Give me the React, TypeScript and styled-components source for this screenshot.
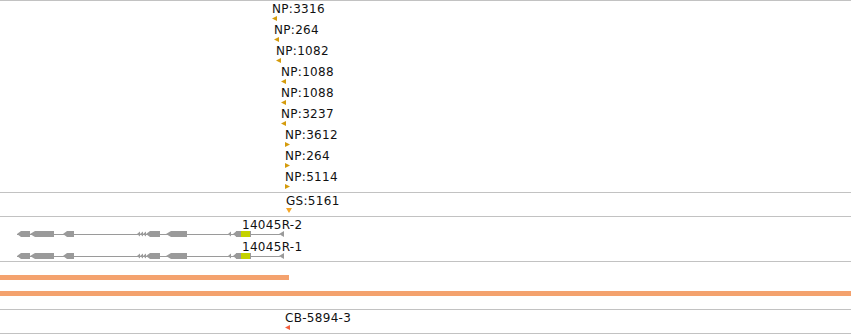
import styled, { createGlobalStyle } from "styled-components";

type Dir = "left" | "right" | "down";

type TFeature = {
  label: string;
  x: number;
  dir: Dir;
};

const npFeatures: TFeature[] = [
  { label: "NP:3316", x: 272, dir: "left" },
  { label: "NP:264", x: 274, dir: "left" },
  { label: "NP:1082", x: 276, dir: "left" },
  { label: "NP:1088", x: 281, dir: "left" },
  { label: "NP:1088", x: 281, dir: "left" },
  { label: "NP:3237", x: 281, dir: "left" },
  { label: "NP:3612", x: 285, dir: "right" },
  { label: "NP:264", x: 285, dir: "right" },
  { label: "NP:5114", x: 285, dir: "right" },
];

const transcripts = [
  { label: "14045R-2", x: 242 },
  { label: "14045R-1", x: 242 },
];

const arrowPoints: Record<Dir, string> = {
  left: "0,2.5 5,0 5,5",
  right: "0,0 5,2.5 0,5",
  down: "0,0 6,0 3,5",
};

const GlobalStyle = createGlobalStyle`
  html, body {
    margin: 0;
    padding: 0;
    background: #ffffff;
  }
  body {
    font-family: "DejaVu Sans", Verdana, sans-serif;
    color: #111;
  }
`;

const Arrow = ({ dir, color }: { dir: Dir; color: string }) => (
  <ArrowSvg
    width={dir === "down" ? 6 : 5}
    height={5}
    viewBox={dir === "down" ? "0 0 6 5" : "0 0 5 5"}
  >
    <polygon points={arrowPoints[dir]} fill={color} />
  </ArrowSvg>
);

const Feature = ({
  feature,
  color,
}: {
  feature: TFeature;
  color: string;
}) => (
  <FeatureRow $x={feature.x}>
    <Label>{feature.label}</Label>
    <Arrow dir={feature.dir} color={color} />
  </FeatureRow>
);

// gene model, same exon layout for both transcripts
const GeneGlyph = () => (
  <GlyphSvg width={851} height={8} viewBox="0 0 851 8">
    <g fill="#9a9a9a">
      <rect x={17} y={3} width={263} height={1} />
      <polygon points="17,3 21,0 30,0 30,6 21,6" />
      <polygon points="30,3 35,0 54,0 54,6 35,6" />
      <polygon points="63,3 67,0 74,0 74,6 67,6" />
      <polygon points="137,3 140,0.5 140,5.5" />
      <polygon points="140,3 143,0.5 143,5.5" />
      <polygon points="143,3 146,0.5 146,5.5" />
      <polygon points="146,3 150,0 160,0 160,6 150,6" />
      <polygon points="166,3 171,0 187,0 187,6 171,6" />
      <polygon points="228,3 231,0.5 231,5.5" />
      <polygon points="233,3 236,0.5 236,5.5" />
      <rect x={236} y={0} width={5} height={6} />
      <rect x={250} y={0} width={1} height={6} />
      <polygon points="279,3 284,0 284,6" />
    </g>
    <rect x={241} y={0} width={9} height={6} fill="#c4d200" />
  </GlyphSvg>
);

const App = () => {
  return (
    <>
      <GlobalStyle />
      <Tracks>
        <Track $height={191}>
          {npFeatures.map((f, i) => (
            <Feature key={i} feature={f} color="#d49b0c" />
          ))}
        </Track>
        <Track $height={23}>
          <Feature
            feature={{ label: "GS:5161", x: 286, dir: "down" }}
            color="#f6a624"
          />
        </Track>
        <Track $height={44}>
          {transcripts.map((t) => (
            <GeneRow key={t.label}>
              <GeneLabel $x={t.x}>{t.label}</GeneLabel>
              <GeneGlyph />
            </GeneRow>
          ))}
        </Track>
        <BarTrack $height={47}>
          <Bar $width={289} />
          <Bar />
        </BarTrack>
        <Track $height={23}>
          <Feature
            feature={{ label: "CB-5894-3", x: 285, dir: "left" }}
            color="#f4603e"
          />
        </Track>
      </Tracks>
    </>
  );
};

export default App;

const Tracks = styled.div`
  width: 851px;
  border-top: 1px solid #c2c2c2;
  display: flex;
  flex-direction: column;
`;

const Track = styled.div<{ $height: number }>`
  height: ${(p) => p.$height}px;
  border-bottom: 1px solid #c2c2c2;
  display: flex;
  flex-direction: column;
  overflow: hidden;
`;

const BarTrack = styled(Track)`
  padding-top: 13px;
  gap: 11px;
  box-sizing: border-box;
  height: ${(p) => p.$height + 1}px;
`;

const FeatureRow = styled.div<{ $x: number }>`
  height: 21px;
  flex: none;
  display: flex;
  flex-direction: column;
  align-items: flex-start;
  margin-left: ${(p) => p.$x}px;
`;

const Label = styled.span`
  font-size: 12px;
  line-height: 14px;
  letter-spacing: 0.3px;
  padding-top: 0.5px;
  white-space: nowrap;
`;

const ArrowSvg = styled.svg`
  display: block;
`;

const GeneRow = styled.div`
  height: 22px;
  flex: none;
  padding-top: 2px;
  box-sizing: border-box;
  display: flex;
  flex-direction: column;
`;

const GeneLabel = styled.span<{ $x: number }>`
  font-size: 12px;
  line-height: 12px;
  height: 12px;
  letter-spacing: 0.3px;
  margin-left: ${(p) => p.$x}px;
  white-space: nowrap;
`;

const GlyphSvg = styled.svg`
  display: block;
`;

const Bar = styled.div<{ $width?: number }>`
  height: 5px;
  flex: none;
  width: ${(p) => (p.$width ? `${p.$width}px` : "100%")};
  background: #f4a26e;
`;
